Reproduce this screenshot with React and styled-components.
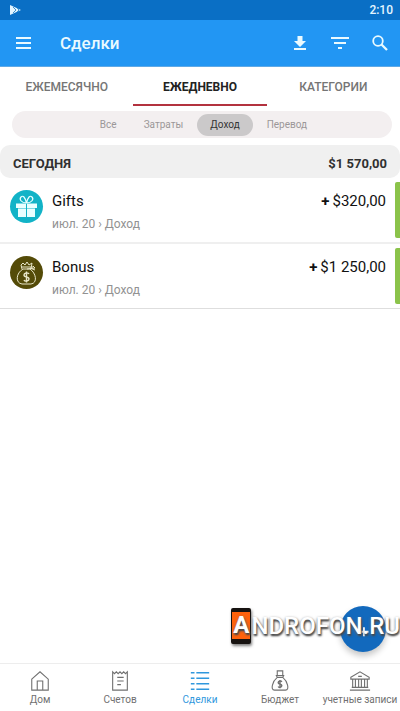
import React from "react";
import styled, { createGlobalStyle } from "styled-components";

const GlobalStyle = createGlobalStyle`
  * { box-sizing: border-box; }
  body { margin: 0; background: #fff; font-family: Roboto, "Noto Sans", sans-serif; }
  button { font: inherit; border: 0; padding: 0; background: none; color: inherit; cursor: pointer; }
  svg { display: block; }
`;

const Page = styled.div`
  min-height: 100vh;
  display: flex;
  flex-direction: column;
  background: #fff;
`;

const StatusBar = styled.div`
  height: 20px;
  padding: 0 7px 0 9px;
  display: flex;
  align-items: center;
  justify-content: space-between;
  background: #0a6fc5;
  color: #e4f5ff;
  font-size: 12px;
  font-weight: 500;
`;

const Header = styled.header`
  height: 47px;
  padding: 0 10px 0 14px;
  display: flex;
  align-items: center;
  background: #2296f3;
  border-bottom: 1px solid #5fa9e6;
  color: #eafaff;
`;

const Title = styled.h1`
  margin: 0 0 0 27px;
  flex: 1;
  font-size: 17px;
  line-height: 20px;
  font-weight: 500;
`;

const Actions = styled.div`
  display: flex;
  gap: 20px;
`;

const IconButton = styled.button`
  display: block;
`;

const Tabs = styled.nav`
  display: grid;
  grid-template-columns: repeat(3, 1fr);
  height: 39px;
`;

const Tab = styled.button`
  && {
    padding-top: 2px;
    border-bottom: 2px solid ${(p) => (p.$active ? "#b3323f" : "transparent")};
    color: ${(p) => (p.$active ? "#222" : "#757575")};
    font-size: 12px;
    font-weight: ${(p) => (p.$active ? 700 : 500)};
  }
`;

const Filters = styled.div`
  height: 27px;
  margin: 5px 8px 7px 12px;
  padding-left: 3px;
  display: flex;
  align-items: center;
  justify-content: center;
  gap: 1px;
  border-radius: 14px;
  background: #f3eff0;
`;

const Filter = styled.button`
  && {
    height: 22px;
    padding: 0 13px;
    border-radius: 11px;
    background: ${(p) => (p.$active ? "#cbc9ca" : "transparent")};
    color: ${(p) => (p.$active ? "#333" : "#9b9798")};
    font-size: 10px;
  }
`;

const DayHeader = styled.div`
  height: 33px;
  padding: 3px 13px 0;
  display: flex;
  align-items: center;
  justify-content: space-between;
  border-radius: 10px;
  background: #f0f0f0;
  color: #303030;
  font-size: 13px;
  font-weight: 700;
`;

const List = styled.ul`
  margin: 0;
  padding: 0;
  flex: 1;
  list-style: none;
`;

const Row = styled.li`
  display: flex;
  align-items: flex-start;
  gap: 9px;
  padding: 4px 0 4px 10px;
  border-bottom: 2px solid #efefef;

  &:last-child {
    border-bottom: 1px solid #dedede;
  }
`;

const Badge = styled.div`
  width: 33px;
  height: 33px;
  margin-top: 8px;
  border-radius: 50%;
  background: ${(p) => p.$color};
`;

const Details = styled.div`
  flex: 1;
  padding-top: 9px;
`;

const Name = styled.div`
  font-size: 15px;
  line-height: 20px;
  color: #111;
`;

const Meta = styled.div`
  margin-top: 5px;
  font-size: 12px;
  line-height: 16px;
  color: #929292;
`;

const Amount = styled.div`
  padding-top: 9px;
  font-size: 15px;
  line-height: 20px;
  color: #111;
`;

const Plus = styled.b`
  margin-right: 3px;
`;

const Stripe = styled.div`
  width: 5px;
  height: 56px;
  border-radius: 2px 0 0 2px;
  background: #8bc34a;
`;

const BottomNav = styled.nav`
  position: relative;
  height: 48px;
  display: grid;
  grid-template-columns: repeat(5, minmax(0, 1fr));
  border-top: 1px solid #ededed;
`;

const NavItem = styled.button`
  && {
    display: flex;
    flex-direction: column;
    align-items: center;
    padding-top: 6px;
    color: ${(p) => (p.$active ? "#3098dd" : "#707070")};
    font-size: 10px;
    line-height: 16px;
    white-space: nowrap;
  }
`;

const AddButton = styled.button`
  && {
    position: absolute;
    right: 14px;
    bottom: 59px;
    width: 46px;
    height: 46px;
    display: grid;
    place-items: center;
    border-radius: 50%;
    background: #1269bd;
    box-shadow: 0 4px 6px rgba(0, 0, 0, 0.22);
    color: #fff;
  }
`;

const Watermark = styled.div`
  position: absolute;
  right: 0;
  bottom: 67px;
  display: flex;
  align-items: center;
  color: #fff;
  font-size: 24px;
  line-height: 34px;
  font-weight: 500;
  text-shadow: 1px 2px 2px #444, 0 1px 3px #777;
  pointer-events: none;
`;

const PhoneLetter = styled.span`
  width: 20px;
  height: 36px;
  display: grid;
  place-items: center;
  border: solid #171311;
  border-width: 4px 1px 5px;
  border-radius: 2px;
  background: #ff620c;
  box-shadow: 1px 2px 3px rgba(0, 0, 0, 0.5);
  font-weight: 700;
  line-height: 27px;
`;

const Line = ({ size = 22, children, width = 1.2 }) => (
  <svg width={size} height={size} viewBox="0 0 24 24" fill="none" stroke="currentColor" strokeWidth={width} aria-hidden="true">
    {children}
  </svg>
);

const PlayIcon = () => (
  <svg width="13" height="12" viewBox="0 0 13 12" aria-hidden="true">
    <path d="M1 1 12 6 1 11Z" fill="#e4f5ff" />
    <path d="m4 3 3 3-3 3M8 4l2 2-2 2" fill="none" stroke="#3c91cf" strokeWidth="1" />
  </svg>
);

const MenuIcon = () => (
  <svg width="19" height="20" viewBox="0 0 19 20" aria-hidden="true">
    <path d="M2 5h15M2 10h15M2 15h15" stroke="currentColor" strokeWidth="2" />
  </svg>
);

const DownloadIcon = () => (
  <svg width="20" height="20" viewBox="0 0 20 20" fill="currentColor" aria-hidden="true">
    <path d="M7.500 3h5v5h3.500l-6 6-6-6h3.500ZM4 15h12v2H4Z" />
  </svg>
);

const FilterIcon = () => (
  <svg width="20" height="20" viewBox="0 0 20 20" fill="currentColor" aria-hidden="true">
    <path d="M1 4h18v2H1ZM4 9h12v2H4ZM8 14h4v2H8Z" />
  </svg>
);

const SearchIcon = () => (
  <svg width="20" height="20" viewBox="0 0 20 20" fill="none" stroke="currentColor" strokeWidth="1.8" aria-hidden="true">
    <circle cx="8" cy="8" r="4.800" />
    <path d="m11.500 11.500 5.500 5.500" strokeWidth="2.300" />
  </svg>
);

const GiftIcon = () => (
  <svg width="33" height="33" viewBox="0 0 33 33" aria-hidden="true">
    <path d="M16.500 13C11 13 9 9 11 7s4 0 5.500 6C18 7 20 5 22 7s0 6-5.500 6Z" fill="none" stroke="#eaffff" strokeWidth="1.2" />
    <path d="M6 13.500h10v4.500H6ZM17 13.500h10v4.500H17ZM8 18.500h8v8.500H8ZM17 18.500h8v8.500h-8Z" fill="#eaffff" />
  </svg>
);

const BonusIcon = () => (
  <svg width="33" height="33" viewBox="0 0 33 33" fill="none" stroke="#e9e7c9" strokeWidth="1" aria-hidden="true">
    <path d="M13 13C6 17 5 27 12 28h9c7-1 5-11-1-15ZM12 13l-1-4 2-2 2 2 2-3 2 3 3-2-1 6M11 11h12M17 13l8-1-2-2M20 12l5 2" />
    <path d="M19 18c-1-2-5-1-5 1 0 3 5 1 5 4 0 2-4 3-5 1M16.500 15.500v11" strokeWidth="1.4" />
  </svg>
);

const HomeIcon = () => (
  <Line><path d="M3 10 12 2l9 8v12H3ZM9 22V12h6v10" /></Line>
);

const ReceiptIcon = () => (
  <Line><path d="M4 2l2 2 2-2 2 2 2-2 2 2 2-2 2 2 2-2v20H4ZM9 8h7M9 12h7M9 16h4" /></Line>
);

const ListIcon = () => (
  <Line width={1.4}><path d="M2 3h4M8 3h14M2 9h4M8 9h14M2 15h4M8 15h14M2 21h4M8 21h14" /></Line>
);

const BudgetIcon = () => (
  <Line>
    <path d="M9 8 8 6h8l-1 2ZM9 6V1h6v5M9 8C4 12 1 22 6 22h12c5 0 2-10-3-14" />
    <path d="M14 13c-1-2-4-1-4 1s4 1 4 3-3 3-4 1M12 11v9" strokeWidth="1.5" />
  </Line>
);

const BankIcon = () => (
  <Line><path d="M2 8l10-6 10 6v2H2ZM4 10v9M7 10v9M10.500 10v9M13.500 10v9M17 10v9M20 10v9M3 19h18M1 22h22M10 7h4" /></Line>
);

const AddIcon = () => (
  <Line size={22} width={2}><path d="M13 10v10M8 15h10" /></Line>
);

const transactions = [
  { name: "Gifts", amount: "$320,00", color: "#12b3c7", Icon: GiftIcon },
  { name: "Bonus", amount: "$1 250,00", color: "#544b08", Icon: BonusIcon },
];

const navItems = [
  { label: "Дом", Icon: HomeIcon },
  { label: "Счетов", Icon: ReceiptIcon },
  { label: "Сделки", Icon: ListIcon, active: true },
  { label: "Бюджет", Icon: BudgetIcon },
  { label: "учетные записи", Icon: BankIcon },
];

export default function App() {
  return (
    <Page>
      <GlobalStyle />
      <StatusBar><PlayIcon /><span>2:10</span></StatusBar>
      <Header>
        <IconButton aria-label="Меню"><MenuIcon /></IconButton>
        <Title>Сделки</Title>
        <Actions>
          <IconButton aria-label="Скачать"><DownloadIcon /></IconButton>
          <IconButton aria-label="Фильтр"><FilterIcon /></IconButton>
          <IconButton aria-label="Поиск"><SearchIcon /></IconButton>
        </Actions>
      </Header>
      <Tabs>
        <Tab>ЕЖЕМЕСЯЧНО</Tab>
        <Tab $active>ЕЖЕДНЕВНО</Tab>
        <Tab>КАТЕГОРИИ</Tab>
      </Tabs>
      <Filters>
        <Filter>Все</Filter>
        <Filter>Затраты</Filter>
        <Filter $active>Доход</Filter>
        <Filter>Перевод</Filter>
      </Filters>
      <DayHeader><span>СЕГОДНЯ</span><span>$1 570,00</span></DayHeader>
      <List>
        {transactions.map(({ name, amount, color, Icon }) => (
          <Row key={name}>
            <Badge $color={color}><Icon /></Badge>
            <Details>
              <Name>{name}</Name>
              <Meta>июл. 20 › Доход</Meta>
            </Details>
            <Amount><Plus>+</Plus>{amount}</Amount>
            <Stripe />
          </Row>
        ))}
      </List>
      <BottomNav>
        {navItems.map(({ label, Icon, active }) => (
          <NavItem key={label} $active={active}><Icon />{label}</NavItem>
        ))}
        <AddButton aria-label="Добавить"><AddIcon /></AddButton>
        <Watermark><PhoneLetter>A</PhoneLetter>NDROFON.RU</Watermark>
      </BottomNav>
    </Page>
  );
}
